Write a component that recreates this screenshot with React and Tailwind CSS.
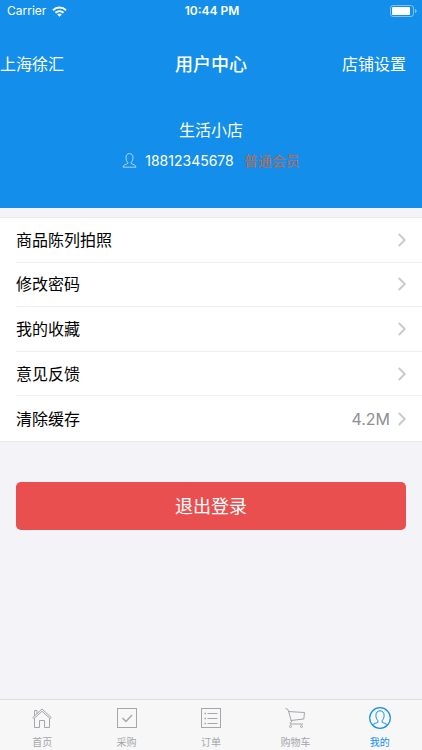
import React from "react";

const FONT = "font-[Inter,'Noto_Sans_CJK_SC',sans-serif]";

function Wifi() {
  return (
    <svg width="15" height="11" viewBox="0 0 15 11" fill="none" stroke="white" strokeWidth="2" aria-hidden="true">
      <path d="M1 4.2a9.4 9.4 0 0 1 13 0" />
      <path d="M3.4 6.8a6 6 0 0 1 8.2 0" />
      <path d="M7.5 10.8 5.2 8.5a3.3 3.3 0 0 1 4.6 0z" fill="white" stroke="none" />
    </svg>
  );
}

function Battery() {
  return (
    <svg width="27" height="12" viewBox="0 0 27 12" fill="none" aria-hidden="true">
      <rect x="0.5" y="0.5" width="23" height="11" rx="2.5" stroke="white" strokeOpacity="0.45" />
      <rect x="2" y="2" width="18" height="8" rx="1" fill="white" />
      <path d="M25 4v4c1-.4 1.6-1.1 1.6-2s-.6-1.6-1.6-2z" fill="white" fillOpacity="0.5" />
    </svg>
  );
}

function Person() {
  return (
    <svg width="15" height="15" viewBox="0 0 14 15" fill="none" stroke="white" strokeOpacity="0.7" strokeWidth="0.9" aria-hidden="true">
      <path d="M5.3 9.3C4 8 3.5 6.500 3.500 4.500 3.500 2 4.800.6 7 .6s3.500 1.400 3.500 3.900c0 2-.5 3.500-1.800 4.800v1.200c1.800 1 4.700 1.400 4.800 3.700H.5c.1-2.300 3-2.700 4.800-3.700z" />
    </svg>
  );
}

function Chevron() {
  return (
    <svg width="8" height="14" viewBox="0 0 8 14" fill="none" stroke="#c7c7cc" strokeWidth="1.8" aria-hidden="true">
      <path d="M.8 1 6.8 7l-6 6" />
    </svg>
  );
}

function HomeIcon() {
  return (
    <svg width="22" height="22" viewBox="0 0 22 22" fill="none" stroke="currentColor" strokeWidth="1" aria-hidden="true">
      <path d="M1.800 10.500 11 2l9.200 8.500-1 1.200L11 4.300l-8.200 7.400z" />
      <path d="M3.500 11.500V20.500h5v-7h5v7h5v-9" />
      <path d="M3.500 9V3.500h2.500v3.300" />
    </svg>
  );
}

function CheckIcon() {
  return (
    <svg width="22" height="22" viewBox="0 0 22 22" fill="none" stroke="currentColor" aria-hidden="true">
      <rect x="1.5" y="1.5" width="19" height="19" />
      <path d="m6.500 11 3.500 3.500 6-6.500" strokeWidth="1.400" />
    </svg>
  );
}

function ListIcon() {
  return (
    <svg width="22" height="22" viewBox="0 0 22 22" fill="none" stroke="currentColor" aria-hidden="true">
      <rect x="1.5" y="1.5" width="19" height="19" />
      <path d="M7.500 6.500h10M7.500 11.500h10M7.500 16.500h10" />
      <path d="M4.500 6.500h1.500M4.500 11.500h1.500M4.500 16.500h1.500" strokeWidth="1.500" />
    </svg>
  );
}

function CartIcon() {
  return (
    <svg width="22" height="22" viewBox="0 0 22 22" fill="none" stroke="currentColor" aria-hidden="true">
      <path d="M1.500 1.500 4 2.500l3.500 12-1.500 2.500h13" />
      <path d="M4.500 4.500 20.500 5.500l-.7 6.500-13 1.500" />
      <circle cx="6.500" cy="19.500" r="1" />
      <circle cx="17.500" cy="19.500" r="1" />
    </svg>
  );
}

function MineIcon() {
  return (
    <svg width="22" height="22" viewBox="0 0 22 22" fill="none" stroke="currentColor" aria-hidden="true">
      <circle cx="11" cy="11" r="10.3" strokeWidth="1.2" />
      <path d="M3.800 17.900c1.200-1.500 3.400-1.700 5-2.500v-1.900C7.500 12 6.900 10.500 6.900 8.500c0-2.900 1.500-4.700 4.100-4.700s4.100 1.800 4.100 4.700c0 2-.6 3.500-1.900 5v1.900c1.600.8 3.800 1 5 2.500" />
    </svg>
  );
}

const rows = [
  { label: "商品陈列拍照" },
  { label: "修改密码" },
  { label: "我的收藏" },
  { label: "意见反馈" },
  { label: "清除缓存", value: "4.2M" },
];

const tabs = [
  { label: "首页", Icon: HomeIcon },
  { label: "采购", Icon: CheckIcon },
  { label: "订单", Icon: ListIcon },
  { label: "购物车", Icon: CartIcon },
  { label: "我的", Icon: MineIcon, active: true },
];

export default function App() {
  return (
    <div className={`flex min-h-screen flex-col bg-[#f3f3f8] text-black ${FONT}`}>
      <header className="bg-[#148eeb] pb-[37px] text-white">
        <div className="grid h-[22px] grid-cols-3 items-center pr-[5px] pl-[7px] text-[12px] leading-4">
          <div className="flex items-center gap-1.5">
            <span>Carrier</span>
            <Wifi />
          </div>
          <span className="text-center font-semibold">10:44 PM</span>
          <div className="flex justify-end">
            <Battery />
          </div>
        </div>
        <div className="mt-[18px] grid h-12 grid-cols-3 items-center text-[16px]">
          <button type="button" className="text-left">上海徐汇</button>
          <h1 className="text-center text-[18px] font-medium">用户中心</h1>
          <button type="button" className="pr-4 text-right">店铺设置</button>
        </div>
        <div className="mt-[30px] flex flex-col items-center">
          <h2 className="text-[16px] leading-6">生活小店</h2>
          <div className="mt-[7px] flex h-[22px] items-center text-[14px]">
            <Person />
            <span className="ml-2">18812345678</span>
            <span className="ml-2.5 text-[#b96b50]">普通会员</span>
          </div>
        </div>
      </header>

      <main className="flex-1">
        <ul className="mt-[9px] grid h-[225px] grid-rows-5 border-y border-[#e9e9ed] bg-white pl-4">
          {rows.map((row) => (
            <li key={row.label} className="border-b border-[#eeeeef] last:border-b-0">
              <button type="button" className="flex h-full w-full items-center pr-4 text-left text-[16px]">
                <span className="flex-1">{row.label}</span>
                {row.value && <span className="mr-2 text-[#8e8e93]">{row.value}</span>}
                <Chevron />
              </button>
            </li>
          ))}
        </ul>
        <div className="mt-10 px-4">
          <button type="button" className="h-12 w-full rounded-[5px] bg-[#e94f4f] text-[18px] text-white">
            退出登录
          </button>
        </div>
      </main>

      <nav className="grid h-[51px] grid-cols-5 border-t border-[#dcdce0] bg-[#f7f7f7]">
        {tabs.map(({ label, Icon, active }) => (
          <a
            key={label}
            href="#"
            aria-current={active ? "page" : undefined}
            className={`flex flex-col items-center pt-[7px] text-[10px] leading-4 ${active ? "text-[#148eeb]" : "text-[#a5a6ab]"}`}
          >
            <Icon />
            <span className="mt-[5px]">{label}</span>
          </a>
        ))}
      </nav>
    </div>
  );
}
